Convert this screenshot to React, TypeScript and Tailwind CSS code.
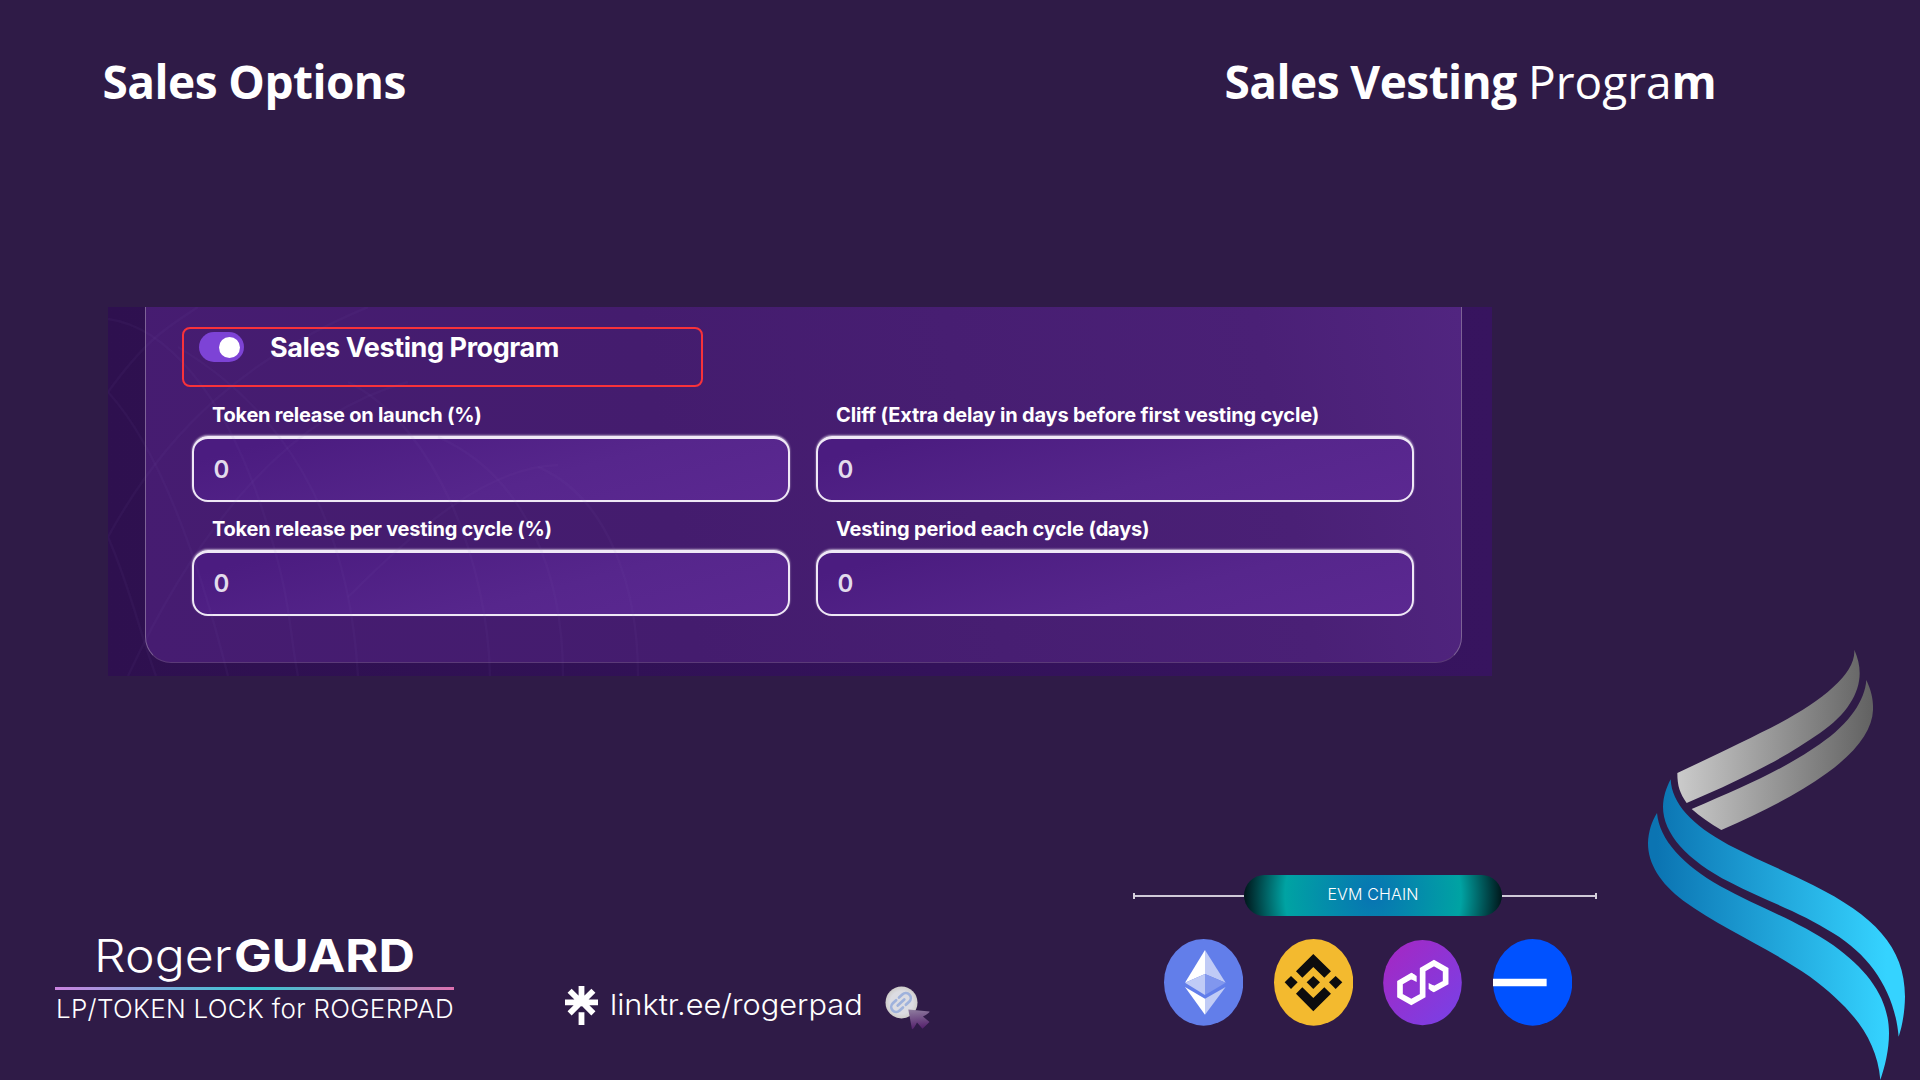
const fields = [
  { label: "Token release on launch (%)", spacing: "tracking-[-0.26px]" },
  { label: "Cliff (Extra delay in days before first vesting cycle)", spacing: "tracking-[-0.16px]" },
  { label: "Token release per vesting cycle (%)", spacing: "tracking-[-0.23px]" },
  { label: "Vesting period each cycle (days)", spacing: "tracking-[-0.17px]" },
];

function Field({ label, spacing }: { label: string; spacing: string }) {
  return (
    <div className="flex flex-col">
      <label className={"ml-5 h-9 whitespace-nowrap text-[20px] leading-[30px] font-[660] text-white " + spacing}>
        {label}
      </label>
      <div className="flex h-[66px] items-center rounded-[16px] border-2 border-t-[3px] border-[#efe8f6] bg-[linear-gradient(165deg,#4b1c80_10%,#56268c_60%,#5b2891)] pt-px pl-[19.5px] text-[24px] leading-none font-semibold text-[#e2dcec] shadow-[0_-1px_2px_rgba(255,255,255,0.6)]">
        0
      </div>
    </div>
  );
}

function Mesh() {
  return (
    <svg className="pointer-events-none absolute inset-0 h-full w-full" viewBox="0 0 1384 369" fill="none" stroke="#8a63b8" strokeOpacity="0.06" strokeWidth="2.5">
      <path d="M0 12C60 20 115 90 150 190S180 320 190 369" />
      <path d="M0 85C50 140 90 250 120 369" />
      <path d="M0 230C22 280 30 320 48 369" />
      <path d="M70 40C170 100 240 200 250 369" />
      <path d="M240 75C330 120 380 260 382 369" />
      <path d="M330 130C420 170 455 270 455 369" />
      <path d="M430 160C500 190 530 280 530 369" />
      <path d="M0 85C40 30 60 20 90 0" />
      <path d="M0 230C60 120 140 50 260 0" />
      <path d="M20 369C80 240 170 110 300 75" />
      <path d="M240 290C310 220 380 160 450 158" />
    </svg>
  );
}

function VestingPanel() {
  return (
    <section className="relative ml-[108px] h-[369px] w-[1384px] overflow-hidden bg-[linear-gradient(90deg,#2e104f,#33125a_60%,#37145f)]">
      <div className="ml-[37px] h-[356px] w-[1317px] rounded-b-[26px] border-[1.5px] border-t-0 border-[#7d6296] border-b-[#5b3a78] bg-[linear-gradient(80deg,#461c71,#441c6e_40%,#4a2076_85%,#512580)]">
        <div className="flex flex-col pl-9">
          <div className="mt-5 flex h-[60px] w-[521px] items-start rounded-[8px] border-2 border-[#f8323a]">
            <div className="mt-[3px] ml-[15px] flex h-[30px] w-[45px] items-center justify-end rounded-full bg-[#7d43d6] pr-1">
              <div className="h-[21px] w-[21px] rounded-full bg-white" />
            </div>
            <h2 className="ml-[26px] whitespace-nowrap text-[27px] leading-[37px] font-[650] tracking-[-0.42px] text-white">
              Sales Vesting Program
            </h2>
          </div>
          <div className="mt-[13px] ml-[10px] grid w-[1222px] grid-cols-2 gap-x-[26px] gap-y-3">
            {fields.map((f) => (
              <Field key={f.label} label={f.label} spacing={f.spacing} />
            ))}
          </div>
        </div>
      </div>
      <Mesh />
    </section>
  );
}

function Ethereum() {
  return (
    <svg className="h-[86.7px] w-[79.3px]" viewBox="0 0 238 260">
      <ellipse cx="119" cy="130" rx="119" ry="130" fill="#627eea" />
      <path d="M123 33 63 131 123 105Z" fill="#fff" />
      <path d="M123 33 185 131 123 105Z" fill="#c0cbf6" />
      <path d="M63 131 123 105V168Z" fill="#c0cbf6" />
      <path d="M185 131 123 105V168Z" fill="#8197ee" />
      <path d="M63 144 123 179V227Z" fill="#fff" />
      <path d="M185 144 123 179V227Z" fill="#c0cbf6" />
    </svg>
  );
}

function Binance() {
  return (
    <svg className="h-[86.7px] w-[79.3px]" viewBox="0 0 238 260">
      <ellipse cx="119" cy="130" rx="119" ry="130" fill="#f3ba2f" />
      <g fill="#0c0c0e">
        <path d="M118 45 171 97 151 116 118 84 85 116 66 97Z" />
        <path d="M118 217 171 164 151 145 118 177 85 145 66 164Z" />
        <path d="M118 111 138 130 118 150 98 130Z" />
        <path d="M51 111 71 130 51 150 32 130Z" />
        <path d="M185 111 205 130 185 150 165 130Z" />
      </g>
    </svg>
  );
}

function Polygon() {
  return (
    <svg className="h-[86.7px] w-[79.3px]" viewBox="0 0 238 260">
      <defs>
        <linearGradient id="poly" x1="0" y1="0" x2="1" y2="1">
          <stop offset="0.1" stopColor="#a229c5" />
          <stop offset="0.9" stopColor="#7b3fe4" />
        </linearGradient>
      </defs>
      <ellipse cx="118.5" cy="131" rx="118" ry="128" fill="url(#poly)" />
      <path
        d="M92 115 85 111 51 131V170L85 189 119 170V92L153 72 188 92V131L153 150 146 146"
        fill="none"
        stroke="#fff"
        strokeWidth="17"
      />
      <path d="M85 101.500 101 111V129L85 120.500ZM153 159.500 137 150V132L153 140.500Z" fill="#fff" />
    </svg>
  );
}

function Base() {
  return (
    <svg className="h-[86.7px] w-[79.3px]" viewBox="0 0 238 260">
      <ellipse cx="119" cy="130" rx="119" ry="130" fill="#0052ff" />
      <path d="M0 119H161V142H0Z" fill="#fff" />
    </svg>
  );
}

function Linktree() {
  return (
    <svg className="h-[39px] w-[33px]" viewBox="0 0 33 39" stroke="#fff" strokeWidth="5.8">
      <path d="M16.5 0V19M0 16.3H33M4.6 4.8 16.5 16.5 28.4 4.8M4.6 27.4 16.5 15.5 28.4 27.4M16.5 26.3V39" fill="none" />
    </svg>
  );
}

function LinkCursor() {
  return (
    <svg className="h-[46px] w-[46px]" viewBox="0 0 46 46">
      <defs>
        <linearGradient id="cur" x1="0.4" y1="0" x2="0.5" y2="1">
          <stop offset="0" stopColor="#8d7a9d" />
          <stop offset="1" stopColor="#531e6b" />
        </linearGradient>
        <radialGradient id="disc">
          <stop offset="0.7" stopColor="#dcdce2" />
          <stop offset="1" stopColor="#cfcdca" />
        </radialGradient>
      </defs>
      <circle cx="16.5" cy="16.5" r="16" fill="url(#disc)" />
      <g transform="rotate(-43 16 16.5)" fill="none" stroke="#9fb2dc" strokeWidth="2.7" strokeLinecap="round">
        <path d="M14 11.5H9.5A5 5 0 0 0 9.5 21.5H14" />
        <path d="M18 11.5H22.5A5 5 0 0 1 22.5 21.5H18" />
        <path d="M11.5 16.5H20.5" />
      </g>
      <path d="M23.3 23.5 44.5 25.5Q45 26.5 38 30.5L44.5 36 37.5 42.8 32 36.5Q28.5 43.5 27 43.2Z" fill="url(#cur)" />
    </svg>
  );
}

function Swoosh() {
  return (
    <svg className="h-[450px] w-[300px]" viewBox="0 0 900 1350">
      <defs>
        <linearGradient id="grey" gradientUnits="userSpaceOnUse" x1="172" y1="0" x2="750" y2="0">
          <stop offset="0" stopColor="#cbcbcb" />
          <stop offset="1" stopColor="#636363" />
        </linearGradient>
        <linearGradient id="blue" gradientUnits="userSpaceOnUse" x1="110" y1="0" x2="800" y2="0">
          <stop offset="0" stopColor="#0b74b2" />
          <stop offset="1" stopColor="#35d3ff" />
        </linearGradient>
      </defs>
      <g fill="url(#grey)">
        <path d="M172 429C280 378 390 326 480 279C610 208 708 130 703 59C714 85 719 105 719 130C719 190 680 255 600 309C480 392 370 446 200 519C180 490 172 470 172 429Z" />
        <path d="M215 537C380 467 490 418 600 342C690 280 735 210 739 150C755 185 760 210 759 240C757 300 710 365 620 430C530 495 430 543 304 600C270 580 240 560 215 537Z" />
      </g>
      <g fill="url(#blue)">
        <path d="M152 448C155 520 215 585 325 644C420 693 500 725 580 766C760 856 855 950 855 1100C854 1150 846 1190 836 1220C825 1090 755 980 640 910C540 845 430 810 330 757C200 690 129 610 129 530C130 500 138 475 152 448Z" />
        <path d="M111 549C118 630 190 705 300 768C410 830 530 870 640 946C750 1025 807 1110 807 1210C807 1260 795 1310 781 1350C770 1220 690 1130 570 1040C430 944 300 892 190 812C120 760 84 700 84 640C85 605 95 575 111 549Z" />
      </g>
    </svg>
  );
}

function EvmChain() {
  return (
    <div className="flex w-[464px] flex-col">
      <div className="flex h-[41px] items-center">
        <div className="h-[6px] w-0.5 bg-[#d6d0dc]" />
        <div className="h-0.5 w-[109px] bg-[#d0cad8]" />
        <div className="flex h-[41px] w-[258px] items-center justify-center rounded-full bg-[radial-gradient(circle_at_center,#0873b3_0,#00a3a3_88px,#001a1e_128px)] pb-[3px] text-[16px] font-[350] text-white">
          <span className="tracking-[0.15px]">EVM CHAIN</span>
        </div>
        <div className="h-0.5 flex-1 bg-[#d0cad8]" />
        <div className="h-[6px] w-0.5 bg-[#d6d0dc]" />
      </div>
      <div className="mt-[23px] ml-[31px] flex gap-[30.3px]">
        <Ethereum />
        <Binance />
        <Polygon />
        <Base />
      </div>
    </div>
  );
}

export default function App() {
  return (
    <main className="flex h-[1080px] w-[1920px] flex-col overflow-hidden bg-[#2f1b47] font-['Inter',sans-serif] text-white">
      <header className="flex h-[130px] pt-[51px] pl-[102.5px] font-['Open_Sans',sans-serif] text-[46px] leading-[60px] font-[660] tracking-[-0.55px] whitespace-nowrap">
        <h1 className="w-[1122px]">Sales Options</h1>
        <h1>
          Sales Vesting <span className="font-[370] tracking-[0px]">Progra</span>m
        </h1>
      </header>
      <div className="flex h-[950px]">
        <div className="flex w-[1620px] flex-col pt-[177px]">
          <VestingPanel />
          <footer className="flex pl-[55px]">
            <div className="w-[399px] pt-[251px] whitespace-nowrap">
              <div className="ml-[39px] flex h-[60px] text-[45px] leading-[57px]">
                <span className="w-[140px] shrink-0 origin-left scale-x-[1.11] font-light">Roger</span>
                <span className="origin-left scale-x-[1.12] font-bold">GUARD</span>
              </div>
              <div className="h-[3px] bg-[linear-gradient(90deg,#cb83e0,#36c8d3_50%,#dd70b0)]" />
              <div className="ml-px pt-0.5 text-[26px] leading-[34px] font-[340] tracking-[0.3px]">
                LP/TOKEN LOCK for ROGERPAD
              </div>
            </div>
            <div className="ml-[111px] flex w-[367px] items-start pt-[310px]">
              <Linktree />
              <span className="ml-3 w-[275px] origin-left scale-x-[1.06] text-[29px] leading-[37px] font-light">
                linktr.ee/rogerpad
              </span>
              <LinkCursor />
            </div>
            <div className="ml-[201px] pt-[199px]">
              <EvmChain />
            </div>
          </footer>
        </div>
        <aside className="pt-[500px]">
          <Swoosh />
        </aside>
      </div>
    </main>
  );
}
